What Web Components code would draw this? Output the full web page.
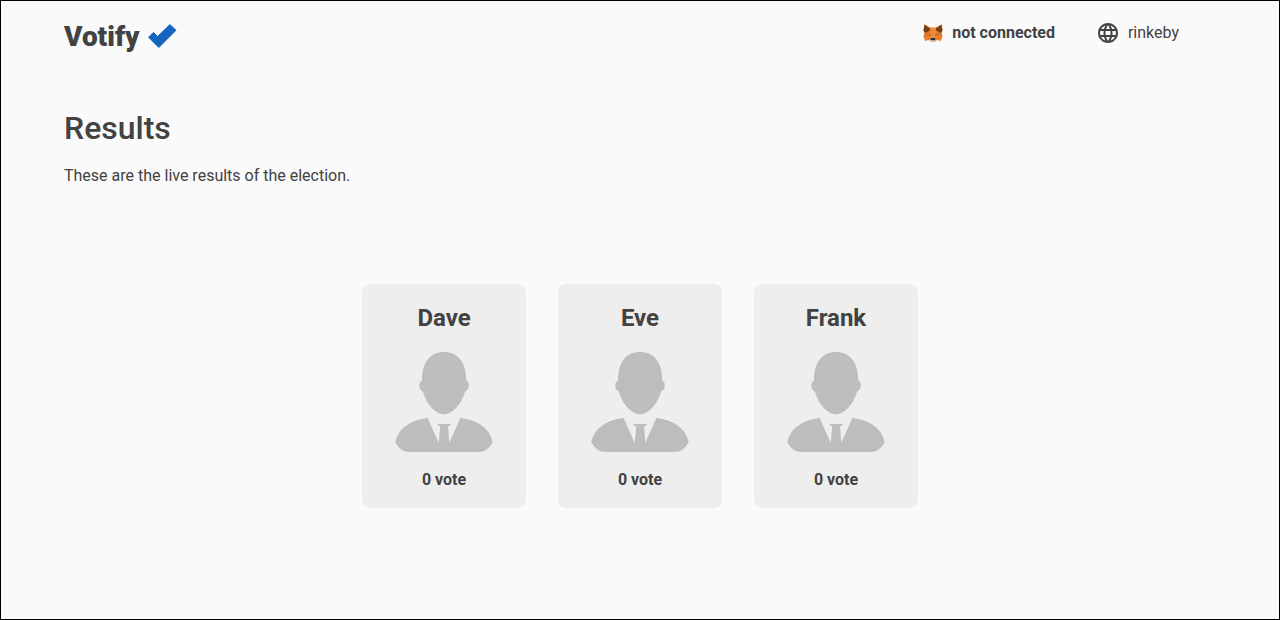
<!DOCTYPE html>
<html lang="en">
<head>
<meta charset="utf-8">
<meta name="viewport" content="width=device-width, initial-scale=1">
<title>Votify</title>
<style>
  body { margin: 0; background: #fafafa; color: #424242; font: 16px/24px Roboto, "Liberation Sans", sans-serif; }
</style>
</head>
<body>
<votify-app>
  <votify-header slot="header">
    <connection-status>not connected</connection-status>
    <network-status>rinkeby</network-status>
  </votify-header>
  <page-intro>
    <span slot="title">Results</span>
    These are the live results of the election.
  </page-intro>
  <candidate-list>
    <candidate-card name="Dave">0 vote</candidate-card>
    <candidate-card name="Eve">0 vote</candidate-card>
    <candidate-card name="Frank">0 vote</candidate-card>
  </candidate-list>
</votify-app>

<script>
const define = (name, html, setup) => {
  const template = document.createElement('template');
  template.innerHTML = html;
  customElements.define(name, class extends HTMLElement {
    constructor() {
      super();
      this.attachShadow({ mode: 'open' }).append(template.content.cloneNode(true));
    }
    connectedCallback() { if (setup) setup(this, this.shadowRoot); }
  });
};

define('votify-app', `
  <style>
    :host { display: block; box-sizing: border-box; min-height: 100vh; outline: 1px solid #000; outline-offset: -1px; padding: 0 5%; }
  </style>
  <slot name="header"></slot>
  <main><slot></slot></main>
`);

define('votify-header', `
  <style>
    :host { display: block; }
    header { display: flex; justify-content: space-between; align-items: flex-start; padding-top: 21px; }
    a { display: flex; align-items: center; gap: 8px; color: inherit; text-decoration: none; font-size: 28px; line-height: 32px; font-weight: 900; }
    svg { display: block; }
    nav { display: flex; gap: 41px; padding-right: 37px; }
  </style>
  <header>
    <a href="#">Votify
      <svg width="30" height="26" viewBox="0 0 30 26" aria-hidden="true"><path fill="#1565c0" stroke="#1565c0" stroke-linejoin="round" d="M.6 13.200 5.400 8.400 9.600 12.600 21.900.6 28 6.300 10.800 23.500Z"/></svg>
    </a>
    <nav aria-label="Connection"><slot></slot></nav>
  </header>
`);

define('connection-status', `
  <style>
    :host { display: flex; align-items: center; gap: 9px; font-weight: 700; }
    svg { display: block; }
  </style>
  <svg width="20" height="18" viewBox="0 0 40 36" aria-hidden="true">
    <path fill="#e88434" d="M3 1 15 7h10L37 1l2 12-2 5 2 7-3 9-8-2-4 3h-8l-4-3-8 2-3-9 2-7-2-5Z"/>
    <path fill="#763e1a" d="m3 1 12 9-2 4-9 4-3-5ZM37 1 25 10l2 4 9 4 3-5Z"/>
    <path fill="#f08a32" d="m15 10 5-2 5 2 3 8-3 9h-10l-3-9Z"/>
    <path fill="#d9722a" d="m4 18 9-4-1 9-10 2ZM36 18l-9-4 1 9 10 2Z"/>
    <path fill="#6b4a35" d="m12 20 4 2-1 1-3-1ZM28 20l-4 2 1 1 3-1Z"/>
    <path fill="#c0ad9e" d="m13 30 4-1h6l4 1-3 5h-8Z"/>
    <path fill="#233447" d="M16 28h8l1 4h-10Z"/>
  </svg>
  <span><slot></slot></span>
`);

define('network-status', `
  <style>
    :host { display: flex; align-items: center; gap: 8px; }
    svg { display: block; }
  </style>
  <svg width="24" height="24" viewBox="0 0 24 24" fill="#424242" aria-hidden="true">
    <path d="M11.99 2C6.47 2 2 6.48 2 12s4.470 10 9.990 10C17.520 22 22 17.520 22 12S17.520 2 11.990 2zm6.930 6h-2.950c-.32-1.250-.78-2.450-1.380-3.560 1.840.63 3.370 1.910 4.330 3.560zM12 4.040c.83 1.200 1.480 2.530 1.910 3.960h-3.820c.43-1.430 1.080-2.760 1.910-3.960zM4.260 14C4.100 13.360 4 12.690 4 12s.1-1.360.26-2h3.380c-.08.66-.14 1.320-.14 2s.06 1.340.14 2H4.260zm.82 2h2.950c.32 1.250.78 2.450 1.380 3.560-1.840-.63-3.370-1.900-4.330-3.560zm2.950-8H5.080c.96-1.660 2.490-2.930 4.330-3.560C8.810 5.550 8.350 6.750 8.030 8zM12 19.960c-.83-1.200-1.480-2.530-1.910-3.960h3.820c-.43 1.430-1.080 2.760-1.910 3.960zM14.340 14H9.660c-.09-.66-.16-1.320-.16-2s.07-1.350.16-2h4.680c.09.65.16 1.320.16 2s-.07 1.340-.16 2zm.25 5.560c.6-1.110 1.060-2.310 1.380-3.560h2.950c-.96 1.650-2.490 2.930-4.330 3.560zM16.360 14c.08-.66.14-1.320.14-2s-.06-1.340-.14-2h3.380c.16.64.26 1.310.26 2s-.1 1.360-.26 2h-3.380z"/>
  </svg>
  <span><slot></slot></span>
`);

define('page-intro', `
  <style>
    :host { display: block; padding-top: 55px; }
    h1 { margin: 0 0 16px; font-size: 32px; line-height: 40px; font-weight: 500; }
    p { margin: 0; }
  </style>
  <h1><slot name="title"></slot></h1>
  <p><slot></slot></p>
`);

define('candidate-list', `
  <style>
    :host { display: flex; flex-wrap: wrap; justify-content: center; gap: 32px; padding: 96px 0; }
  </style>
  <slot></slot>
`);

define('candidate-card', `
  <style>
    :host { display: block; }
    article { display: flex; flex-direction: column; align-items: center; gap: 16px; padding: 16px 32px; border-radius: 8px; background: #eee; }
    h2 { margin: 0; font-size: 24px; line-height: 36px; font-weight: 700; }
    svg { display: block; }
    p { margin: 0; font-weight: 700; }
  </style>
  <article>
    <h2></h2>
    <svg width="100" height="100" viewBox="0 0 100 100" fill="#bdbdbd" aria-hidden="true">
      <path d="M50 0C64 0 72.300 10 72.300 29C76 29 75.500 38.500 71 39.500C68 51 59 62.300 50 62.300S32 51 29 39.500C24.500 38.500 24 29 28 29C28 10 36 0 50 0Z"/>
      <path d="M33.700 66 44.700 91 46.300 74.500Q43.500 74 43.300 72H57Q56.500 74 54 74.500L55.300 91 66.300 66C86 68.500 96 78 98.700 90Q94 100 84 100H16Q6 100 1.300 90C4 78 14 68.500 33.700 66Z"/>
    </svg>
    <p><slot></slot></p>
  </article>
`, (host, root) => { root.querySelector('h2').textContent = host.getAttribute('name'); });
</script>
</body>
</html>
